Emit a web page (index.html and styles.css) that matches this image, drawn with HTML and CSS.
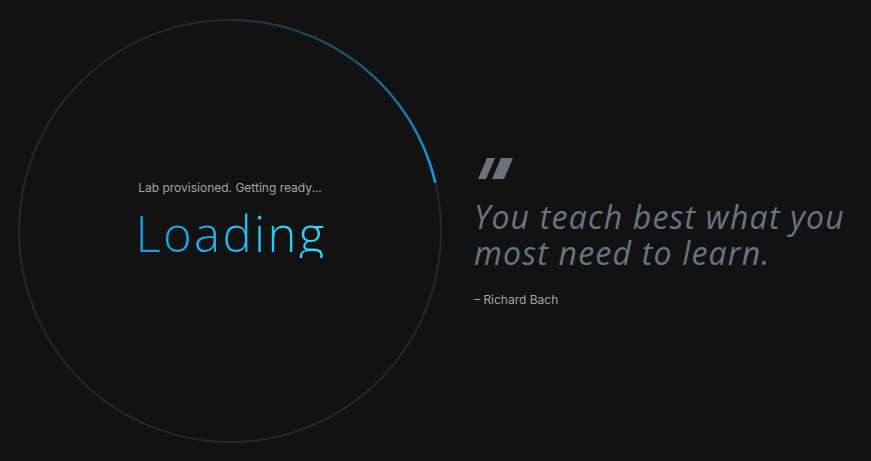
FILE: index.html
```html
<!DOCTYPE html>
<html lang="en">
<head>
<meta charset="utf-8">
<title>Loading</title>
<link rel="stylesheet" href="styles.css">
</head>
<body>
<main class="page">
  <section class="loader">
    <svg class="ring" viewBox="0 0 424 424" width="424" height="424" aria-hidden="true">
      <defs>
        <linearGradient id="arc" gradientUnits="userSpaceOnUse" x1="212" y1="1" x2="417" y2="164">
          <stop offset="0" stop-color="#0a9be0" stop-opacity="0.05"/>
          <stop offset="0.5" stop-color="#0a8fd0" stop-opacity="0.5"/>
          <stop offset="1" stop-color="#0ca3ea" stop-opacity="1"/>
        </linearGradient>
      </defs>
      <circle cx="212" cy="212" r="211" fill="none" stroke="#282828" stroke-width="2"/>
      <path d="M212 1 A211 211 0 0 1 417.4 163.8" fill="none" stroke="url(#arc)" stroke-width="2.5"/>
    </svg>
    <div class="status">
      <p class="status-note">Lab provisioned. Getting ready...</p>
      <h1 class="status-title">Loading</h1>
    </div>
  </section>
  <section class="quote">
    <svg class="quote-mark" width="40" height="22" viewBox="0 0 40 22" aria-hidden="true">
      <polygon points="4,21 12,21 21,0 13,0" fill="#6b717d"/>
      <polygon points="18,21 30,21 39,0 27,0" fill="#6b717d"/>
    </svg>
    <blockquote class="quote-text">You teach best what you most need to learn.</blockquote>
    <p class="quote-author">– Richard Bach</p>
  </section>
</main>
</body>
</html>
```

FILE: styles.css
```css
html, body {
  margin: 0;
  padding: 0;
  background: #121212;
  height: 100%;
}

.page {
  display: flex;
  align-items: center;
  height: 461px;
  padding-left: 18px;
  box-sizing: border-box;
  gap: 32px;
}

.loader {
  display: grid;
  width: 424px;
  height: 424px;
  flex: none;
}

.ring,
.status {
  grid-area: 1 / 1;
}

.status {
  display: flex;
  flex-direction: column;
  align-items: center;
  justify-content: center;
  padding-bottom: 24px;
}

.status-note {
  margin: 0;
  font-family: Inter, "Liberation Sans", sans-serif;
  font-size: 12px;
  line-height: 16px;
  color: #a3a3a3;
}

.status-title {
  margin: 12px 0 0;
  padding-left: 2px;
  font-family: "Open Sans", Lato, sans-serif;
  font-weight: 300;
  font-size: 49px;
  line-height: 50px;
  letter-spacing: 2.4px;
  color: #1ea5ec;
  background: linear-gradient(90deg, #1896e2, #2edcff);
  -webkit-background-clip: text;
  background-clip: text;
  -webkit-text-fill-color: transparent;
}

.quote {
  width: 385px;
  padding-top: 4px;
}

.quote-mark {
  display: block;
}

.quote-text {
  margin: 19px 0 0;
  font-family: "Open Sans", Lato, sans-serif;
  font-style: italic;
  font-weight: 400;
  font-size: 32px;
  line-height: 36px;
  letter-spacing: 1.2px;
  color: #6b7280;
}

.quote-author {
  margin: 21px 0 0;
  font-family: Inter, "Liberation Sans", sans-serif;
  font-size: 12px;
  line-height: 16px;
  color: #a3a3a3;
}
```
